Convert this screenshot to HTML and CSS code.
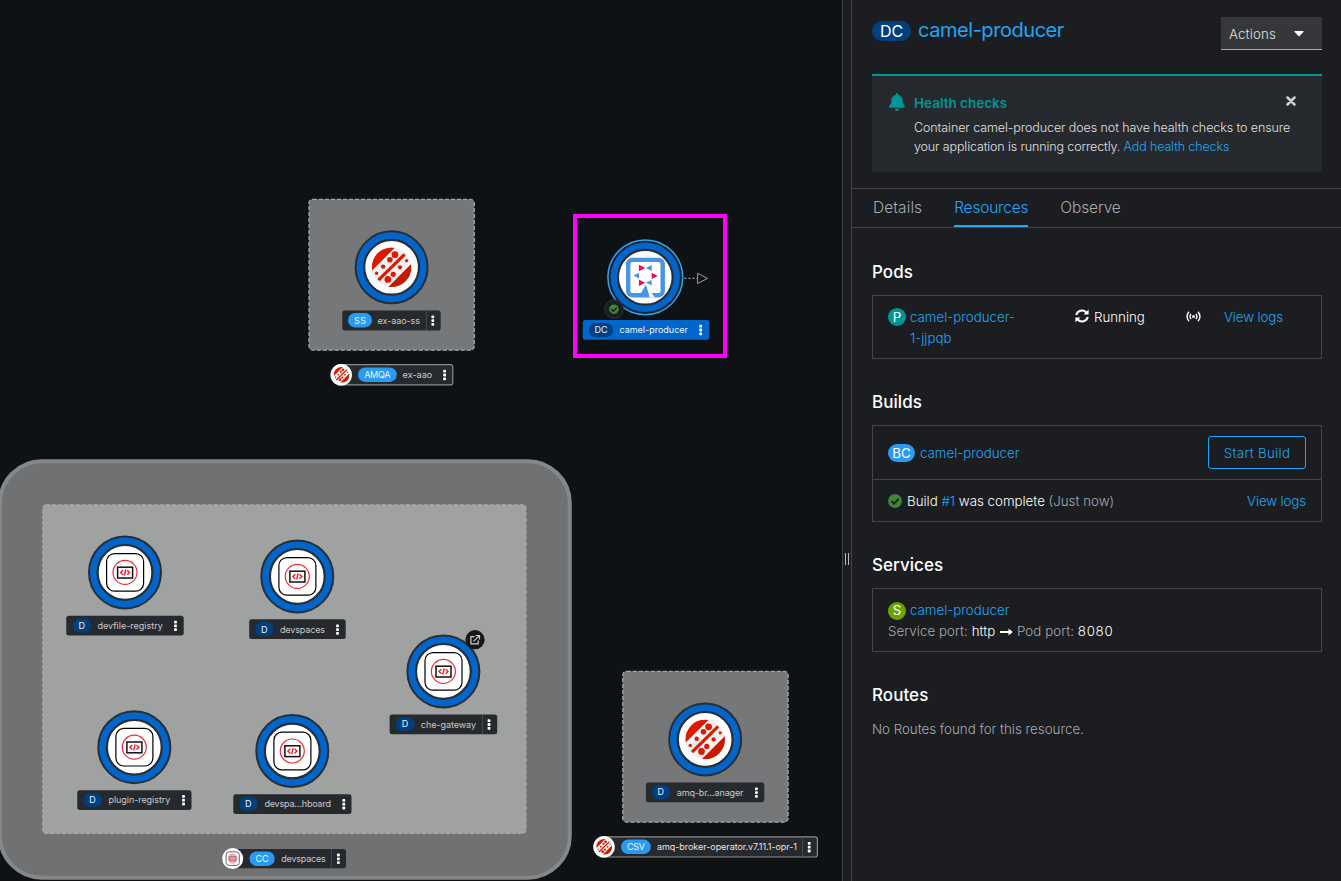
FILE: index.html
```html
<!DOCTYPE html>
<html lang="en">
<head>
<meta charset="utf-8">
<title>Topology</title>
<link rel="stylesheet" href="styles.css">
</head>
<body>
<div class="app">
<main class="canvas">
<svg class="graph" width="842" height="881" viewBox="0 0 842 881">
  <defs>
    <g id="ring">
      <circle r="36" class="ring-outer"/>
      <circle r="27.4" class="ring-inner"/>
    </g>
    <g id="kebab" fill="#fff">
      <rect x="-1.4" y="-5.2" width="2.8" height="2.8" rx=".7"/>
      <rect x="-1.4" y="-1.4" width="2.8" height="2.8" rx=".7"/>
      <rect x="-1.4" y="2.4" width="2.8" height="2.8" rx=".7"/>
    </g>
    <clipPath id="disc"><circle r="19.8"/></clipPath>
    <g id="amq">
      <g clip-path="url(#disc)">
        <rect x="-20" y="-20" width="40" height="40" fill="#f3f3f3"/>
        <path d="M-20 3.7L3.7-20H-20Z" fill="#db1a00"/>
        <path d="M20-3.7L-3.7 20H20Z" fill="#c81a00"/>
      </g>
      <path d="M-13.2 12.8L13-13" stroke="#db1a00" stroke-width="3.2"/>
      <g fill="#db1a00">
        <circle cx="3.4" cy="-12.6" r="3.4"/><circle cx="-1.7" cy="-7.6" r="2.8"/><circle cx="-8.5" cy="-.7" r="2.2"/><circle cx="-15" cy="6" r="1.7"/>
        <circle cx="15" cy="-6.6" r="1.6"/><circle cx="8.4" cy="0" r="2.1"/><circle cx="1.6" cy="7" r="2.6"/><circle cx="-3.7" cy="12.1" r="3.4"/>
      </g>
    </g>
    <g id="dev">
      <rect x="-18.4" y="-18.8" width="37" height="37.6" rx="8" fill="#fff" stroke="#000" stroke-width="1.2"/>
      <circle r="12" fill="#fff" stroke="#ee2b3a" stroke-width="1.2"/>
      <rect x="-7.4" y="-5.2" width="15" height="10.8" fill="#fff" stroke="#111" stroke-width="1.5"/>
      <path d="M-2-2.2L-4.4 .1L-2 2.4M2.2-2.2L4.6 .1L2.2 2.4M.8-2.9L-.6 3.1" fill="none" stroke="#ee1c2e" stroke-width="1.4"/>
    </g>
  </defs>

  <!-- application groups -->
  <rect x="0" y="461.2" width="569.8" height="416.5" rx="42" fill="#707173" stroke="#858789" stroke-width="4"/>
  <rect x="42.8" y="504.8" width="483.2" height="328.6" rx="3" class="group-light"/>
  <rect x="309" y="199.3" width="165.3" height="150.9" rx="4" class="group"/>
  <rect x="622.8" y="671.3" width="165.3" height="150.9" rx="4" class="group"/>

  <!-- ex-aao -->
  <g transform="translate(391.6 267.3)"><use href="#ring"/><use href="#amq"/></g>
  <rect x="342.3" y="310.4" width="98.4" height="20" rx="2.5" class="label"/>
  <rect x="348" y="313" width="24" height="14.4" rx="7.2" fill="#2b9af3"/>
  <text x="354" y="323.6" textLength="12" class="kind">SS</text>
  <text x="377.6" y="324" textLength="42.4">ex-aao-ss</text>
  <path d="M426.5 310.4V330.4" class="divider"/>
  <use href="#kebab" x="432.8" y="320.6"/>
  <rect x="337" y="364.7" width="115.8" height="20.2" rx="2.5" class="label outlined"/>
  <circle cx="341.2" cy="374.8" r="10.8" fill="#fff"/>
  <use href="#amq" transform="translate(341.6 374.8) scale(.4)"/>
  <rect x="358" y="367.5" width="38.8" height="14.4" rx="7.2" fill="#2b9af3"/>
  <text x="364.2" y="378.2" textLength="26.2" class="kind">AMQA</text>
  <text x="402.6" y="378.2" textLength="29.6">ex-aao</text>
  <use href="#kebab" x="444.6" y="375"/>

  <!-- camel-producer -->
  <rect x="575" y="216" width="150" height="140" fill="none" stroke="#f0f" stroke-width="4"/>
  <g transform="translate(645.3 277.3)">
    <circle r="37.4" fill="#212427" stroke="#2ea1f5" stroke-width="1.5"/>
    <circle r="34.7" fill="#06c"/>
    <circle r="27.4" class="ring-inner"/>
    <rect x="-17.1" y="-17.4" width="34.5" height="35.3" rx="4" fill="#fff" stroke="#4a94e8" stroke-width="4.4"/>
    <path d="M.3 7.6L-6.6 19.8H8.5Z" fill="#4a94e8"/>
    <path d="M1.3 9.3L9.6 20.3H4.4Z" fill="#fff"/>
    <path d="M-6.4-12.6V-6L0-9.3ZM6.4-4.6V1.8L12.6-1.4ZM-6.4 2.3V8.7L-.2 5.4Z" fill="#f00b51"/>
    <path d="M6.4-12.2V-6.2L.6-9.3ZM-6.2-4.4V1.2L-12-1.7ZM6.4 2.7V8.3L.6 5.4Z" fill="#4a94e8"/>
  </g>
  <path d="M684.5 278.4H697" stroke="#9a9da0" stroke-width="1.2" stroke-dasharray="2 2"/>
  <path d="M697.6 273.3V283.5L707.6 278.4Z" fill="none" stroke="#9a9da0"/>
  <circle cx="614" cy="309.2" r="9.3" fill="#1b1d21" stroke="#2f3338"/>
  <circle cx="614" cy="309.2" r="4.8" fill="#3e8635"/>
  <path d="M611.4 309.3L613.4 311.2L616.7 307.6" fill="none" stroke="#151515" stroke-width="1.4"/>
  <rect x="582.8" y="320" width="126.5" height="19.8" rx="2.5" fill="#06c"/>
  <rect x="588.6" y="323" width="24.6" height="14" rx="7" fill="#004080"/>
  <text x="594.4" y="333.2" textLength="13.2" class="kind">DC</text>
  <text x="619.4" y="333.2" textLength="68.6" class="kind">camel-producer</text>
  <use href="#kebab" x="700.7" y="330"/>

  <!-- devspaces -->
  <g transform="translate(125 572.4)"><use href="#ring"/><use href="#dev"/></g>
  <rect x="66.3" y="615.7" width="117.4" height="19.8" rx="2.5" class="label"/>
  <rect x="72.8" y="618.4" width="18.6" height="14.2" rx="7.1" fill="#004080"/>
  <text x="78.6" y="629" textLength="6.6" class="kind">D</text>
  <text x="97.4" y="629.2" textLength="65.4">devfile-registry</text>
  <use href="#kebab" x="175.5" y="625.9"/>

  <g transform="translate(297.3 576.4)"><use href="#ring"/><use href="#dev"/></g>
  <rect x="249.2" y="619.3" width="96.5" height="19.8" rx="2.5" class="label"/>
  <rect x="255.2" y="621.9" width="18.6" height="14.2" rx="7.1" fill="#004080"/>
  <text x="261" y="632.5" textLength="6.6" class="kind">D</text>
  <text x="280" y="632.8" textLength="45">devspaces</text>
  <use href="#kebab" x="337.5" y="629.6"/>

  <g transform="translate(443.4 671.4)"><use href="#ring"/><use href="#dev"/></g>
  <circle cx="475" cy="639.7" r="9.6" fill="#151719"/>
  <path d="M474.6 636.6H470.9V643.8H478.2V640.6M473.4 641.4L479.4 635.6M475.6 635.5H479.5V639.4" fill="none" stroke="#d2d2d2" stroke-width="1.2"/>
  <rect x="389.6" y="714.4" width="107.6" height="19.8" rx="2.5" class="label"/>
  <rect x="395.9" y="717" width="18.6" height="14.2" rx="7.1" fill="#004080"/>
  <text x="401.7" y="727.3" textLength="6.6" class="kind">D</text>
  <text x="420.8" y="727.9" textLength="55.2">che-gateway</text>
  <path d="M482.5 714.4V734.2" class="divider"/>
  <use href="#kebab" x="489" y="724.5"/>

  <g transform="translate(134.3 747.2)"><use href="#ring"/><use href="#dev"/></g>
  <rect x="77.3" y="790.2" width="114.2" height="19.8" rx="2.5" class="label"/>
  <rect x="83.5" y="792.8" width="18.6" height="14.2" rx="7.1" fill="#004080"/>
  <text x="89.3" y="803.3" textLength="6.6" class="kind">D</text>
  <text x="108.5" y="803.4" textLength="61.8">plugin-registry</text>
  <use href="#kebab" x="183.5" y="800.2"/>

  <g transform="translate(292.3 751)"><use href="#ring"/><use href="#dev"/></g>
  <rect x="233.3" y="794.2" width="118.2" height="19.8" rx="2.5" class="label"/>
  <rect x="239.3" y="796.8" width="18.6" height="14.2" rx="7.1" fill="#004080"/>
  <text x="245.1" y="807.3" textLength="6.6" class="kind">D</text>
  <text x="264.4" y="807.4" textLength="66.6">devspa…hboard</text>
  <use href="#kebab" x="343.8" y="804.2"/>

  <rect x="228" y="848.9" width="118" height="19.4" rx="2.5" class="label"/>
  <circle cx="232.7" cy="858.6" r="10.5" fill="#fff"/>
  <g transform="translate(232.7 858.6)">
    <rect x="-6.6" y="-6.8" width="13.2" height="13.6" rx="3" fill="none" stroke="#666"/>
    <circle r="4.4" fill="#f5b5b8" stroke="#f08f95" stroke-width="1"/>
    <rect x="-3" y="-2.2" width="6" height="4.4" fill="#e59aa0" stroke="#96797c" stroke-width=".8"/>
  </g>
  <rect x="249.5" y="851.5" width="25.2" height="14.4" rx="7.2" fill="#2b9af3"/>
  <text x="255.6" y="862" textLength="13" class="kind">CC</text>
  <text x="281.2" y="862" textLength="44.6">devspaces</text>
  <path d="M331.4 849V868.4" class="divider"/>
  <use href="#kebab" x="338.4" y="858.8"/>

  <!-- amq-broker-operator -->
  <g transform="translate(705.2 739.4)"><use href="#ring"/><use href="#amq"/></g>
  <rect x="645.9" y="782.4" width="118.4" height="19.9" rx="2.5" class="label"/>
  <rect x="651.8" y="785" width="18.6" height="14.2" rx="7.1" fill="#004080"/>
  <text x="657.6" y="795.4" textLength="6.6" class="kind">D</text>
  <text x="676.7" y="796" textLength="66.8">amq-br…anager</text>
  <use href="#kebab" x="756.4" y="792.6"/>
  <rect x="600" y="836.8" width="217.4" height="20.2" rx="2.5" class="label outlined"/>
  <circle cx="604" cy="846.8" r="10.8" fill="#fff"/>
  <use href="#amq" transform="translate(604.2 846.8) scale(.4)"/>
  <rect x="621" y="839.6" width="29.8" height="14.4" rx="7.2" fill="#2b9af3"/>
  <text x="627" y="850.2" textLength="18" class="kind">CSV</text>
  <text x="657" y="850.2" textLength="140" class="bright">amq-broker-operator.v7.11.1-opr-1</text>
  <path d="M802.5 837V857" class="divider"/>
  <use href="#kebab" x="809.2" y="847.2"/>
</svg>
</main>
<div class="splitter"><span class="grip"></span></div>
<aside class="panel">
  <header class="head">
    <h1 class="title"><span class="badge badge-lg">DC</span><a class="name">camel-producer</a></h1>
    <button class="actions"><span>Actions</span><svg width="10" height="6" viewBox="0 0 10 6"><path d="M.6 0H9.4Q9.9 .4 9.4 1L5.6 5Q5 5.5 4.4 5L.6 1Q.1 .4 .6 0Z" fill="#fff"/></svg></button>
  </header>
  <section class="alert">
    <svg class="bell" width="16" height="18" viewBox="0 0 448 512"><path fill="#009596" d="M224 512c35.320 0 63.970-28.650 63.970-64H160.030c0 35.350 28.650 64 63.970 64zm215.390-149.710c-19.320-20.760-55.470-51.990-55.470-154.290 0-77.700-54.480-139.900-127.940-155.160V32c0-17.670-14.320-32-31.980-32s-31.980 14.330-31.980 32v20.840C118.560 68.100 64.080 130.300 64.080 208c0 102.300-36.150 133.530-55.470 154.290-6 6.450-8.660 14.160-8.610 21.710.11 16.400 12.980 32 32.100 32h383.800c19.120 0 32-15.600 32.100-32 .05-7.550-2.610-15.270-8.610-21.710z"/></svg>
    <div class="alert-body">
      <h4>Health checks</h4>
      <p><span class="line1">Container camel-producer does not have health checks to ensure</span><br><span class="line2">your application is running correctly. <a>Add health checks</a></span></p>
    </div>
    <svg class="close" width="10" height="10" viewBox="0 0 10 10"><path d="M1.5 1.5L8.500 8.500M8.500 1.500L1.500 8.500" stroke="#d2d2d2" stroke-width="2.5" stroke-linecap="round"/></svg>
  </section>
  <nav class="tabs"><a class="tab">Details</a><a class="tab on">Resources</a><a class="tab">Observe</a></nav>

  <h2>Pods</h2>
  <div class="card pod">
    <div class="pod-name"><span class="badge round teal">P</span><a>camel-producer-<br>1-jjpqb</a></div>
    <div class="status"><svg width="14" height="14" viewBox="0 0 14 14" fill="none" stroke="#fff" stroke-width="2"><path d="M1.300 6A5.700 5.400 0 0 1 11.300 3.500M12.700 8A5.700 5.400 0 0 1 2.700 10.500"/><path d="M13.600 .6V5.600H8.600ZM.4 13.400V8.400H5.400Z" fill="#fff" stroke="none"/></svg><span>Running</span></div>
    <svg class="signal" width="15" height="11" viewBox="0 0 15 11" fill="none" stroke="#fff" stroke-width="1.400"><path d="M3 .8Q-.9 5.500 3 10.200M12 .8Q15.900 5.500 12 10.200M5 3Q3.200 5.500 5 8M10 3Q11.800 5.500 10 8"/><circle cx="7.500" cy="5.500" r="1.500" fill="#fff" stroke="none"/></svg>
    <a class="logs">View logs</a>
  </div>

  <h2>Builds</h2>
  <div class="card">
    <div class="row build"><span class="who"><span class="badge sky">BC</span><a>camel-producer</a></span><button class="start">Start Build</button></div>
    <div class="row result"><span class="who"><svg class="ok" width="14" height="14" viewBox="0 0 14 14"><circle cx="7" cy="7" r="6.900" fill="#3e8635"/><path d="M3.500 7.200L6 9.600L10.600 4.900" fill="none" stroke="#1b1d21" stroke-width="2"/></svg><span>Build <a>#1</a> was complete <i>(Just now)</i></span></span><a class="logs">View logs</a></div>
  </div>

  <h2>Services</h2>
  <div class="card service">
    <div class="who"><span class="badge round green">S</span><a>camel-producer</a></div>
    <div class="ports"><i>Service port:</i> http <svg width="13" height="8" viewBox="0 0 13 8"><path d="M0 3H8.500V.5L12.800 4L8.500 7.500V5H0Z" fill="#fff"/></svg> <i>Pod port:</i> <span class="num">8080</span></div>
  </div>

  <h2>Routes</h2>
  <p class="empty">No Routes found for this resource.</p>
</aside>
</div>
</body>
</html>
```
FILE: styles.css
```css
* { box-sizing: border-box; }
body { margin: 0; background: #0f1214; font-family: Inter, "Open Sans", sans-serif; font-weight: 300; font-size: 13.3px; line-height: 21px; color: #fff; }
a { color: #1fa7f8; text-decoration: none; }
i { font-style: normal; color: #a8aaae; }
svg { flex: none; }
button { font: inherit; margin: 0; }

.app { display: flex; width: 1341px; height: 881px; overflow: hidden; }
.canvas { flex: none; width: 842px; background: #0f1214; }
.graph { display: block; }
.graph text { font-size: 9px; font-weight: 400; fill: #c9cbcd; }
.graph text.kind { fill: #f0f4fa; }
.graph text.bright { fill: #e6e7e8; }
.ring-outer { fill: #06c; stroke: #292e34; stroke-width: 2; }
.ring-inner { fill: #fff; stroke: #292e34; stroke-width: 2.2; }
.group { fill: #767779; stroke: #a3a5a7; stroke-width: 1.3; stroke-dasharray: 4 2; }
.group-light { fill: #a0a2a1; stroke: #acaeae; stroke-width: 1; stroke-dasharray: 4 2; }
.label { fill: #26292d; }
.outlined { stroke: #8a8d90; stroke-width: 1.2; }
.divider { stroke: #45494e; stroke-width: 1; }

.splitter { flex: none; width: 10px; display: flex; align-items: center; justify-content: center; background: #1b1d21; border: solid #444548; border-width: 0 1px; }
.grip { width: 4px; height: 12px; margin-top: 237px; border: solid #b8bbbe; border-width: 0 1px; }
.panel { flex: 1; min-width: 0; background: #1b1d21; padding: 17px 19px 0 20px; }

.head { display: flex; justify-content: space-between; align-items: flex-start; height: 57px; }
.title { display: flex; align-items: center; gap: 7px; margin: 3px 0 0; height: 20px; font-size: 20px; font-weight: 400; }
.name { letter-spacing: -.45px; }
.badge { display: inline-flex; align-items: center; justify-content: center; flex: none; height: 18px; border-radius: 9px; color: #fff; font-weight: 400; }
.badge-lg { width: 39px; height: 20px; margin-top: 2px; border-radius: 10px; background: #004080; font-size: 16px; }
.actions { display: flex; align-items: center; justify-content: space-between; width: 101px; height: 33px; padding: 2px 18px 0 8px; color: #e0e0e0; background: #36373a; border: 0; border-bottom: 1px solid #aaabac; letter-spacing: .15px; }

.alert { display: flex; align-items: flex-start; height: 98px; padding: 17px 26px 0 17px; border-top: 2px solid #009596; background: #26292d; }
.alert-body { flex: 1; min-width: 0; margin-left: 9px; }
.alert h4 { margin: 0; font-size: 13.500px; font-weight: 600; line-height: 20px; color: #009596; }
.alert p { margin: 5px 0 0; font-size: 12.500px; line-height: 19px; color: #e0e0e0; white-space: nowrap; }
.line1 { letter-spacing: -.09px; }
.line2 { letter-spacing: -.13px; }
.close { margin-top: 3px; }

.tabs { display: flex; gap: 32px; height: 40px; margin: 16px -19px 0 -20px; padding-left: 21px; border: solid #444548; border-width: 1px 0; font-size: 15.500px; }
.tab { display: flex; align-items: center; height: 38px; padding-bottom: 2px; color: #a8aaae; }
.tab:first-child { letter-spacing: .08px; }
.tab.on { color: #1fa7f8; letter-spacing: -.2px; box-shadow: inset 0 -2px #1fa7f8; }
.tab:last-child { letter-spacing: -.1px; }

h2 { margin: 32px 0 11px; font-size: 17px; line-height: 24px; font-weight: 500; letter-spacing: .05px; }
.card { border: 1px solid #444548; margin-bottom: 31px; }
.card + h2 { margin-top: 0; }
.who { display: flex; align-items: center; gap: 5px; }
.round { width: 18px; }
.teal { background: #009596; }
.green { background: #6ca100; }
.sky { width: 27px; background: #2b9af3; }
.pod { display: grid; grid-template-columns: 187px 111px 38px 1fr; height: 64px; padding: 11px 15px 0; }
.pod-name, .status { display: flex; gap: 4px; align-items: flex-start; }
.pod-name .badge { margin-top: 1px; }
.status { gap: 5px; }
.status svg { margin-top: 2px; }
.signal { margin-top: 4px; }
.logs { letter-spacing: -.12px; }
.row { display: flex; align-items: center; justify-content: space-between; padding: 0 15px; }
.build { height: 54px; padding-top: 1px; border-bottom: 1px solid #444548; }
.build .who a { padding-top: 1px; }
.start { width: 98px; height: 33px; margin-top: -1px; padding: 1px 0 0; color: #1fa7f8; background: none; border: 1px solid #1fa7f8; border-radius: 3px; letter-spacing: .3px; }
.result { height: 41px; padding-top: 2px; }
.ok { margin-top: -2px; }
.service { height: 64px; padding: 11px 15px 0; }
.service .who { gap: 4px; }
.ports { white-space: nowrap; letter-spacing: .06px; }
.ports i + svg, .ports svg { margin: 0 0 0 1px; }
.num { letter-spacing: .7px; }
.empty { margin: 12px 0 0; color: #a8aaae; }
```
